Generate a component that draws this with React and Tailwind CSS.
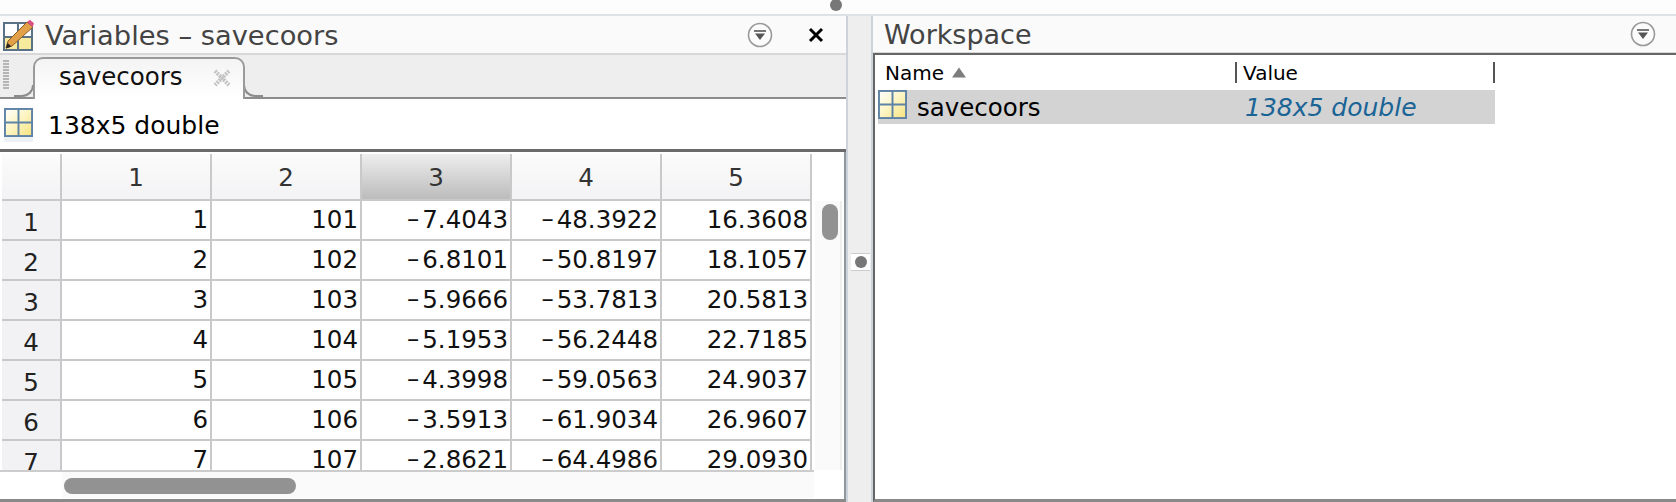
import React from "react";

const rows = [
  [1, 101, "7.4043", "48.3922", "16.3608"],
  [2, 102, "6.8101", "50.8197", "18.1057"],
  [3, 103, "5.9666", "53.7813", "20.5813"],
  [4, 104, "5.1953", "56.2448", "22.7185"],
  [5, 105, "4.3998", "59.0563", "24.9037"],
  [6, 106, "3.5913", "61.9034", "26.9607"],
  [7, 107, "2.8621", "64.4986", "29.0930"],
];

function GridIcon({ id, className }) {
  return (
    <svg viewBox="0 0 30 30" className={className}>
      <defs>
        <linearGradient id={id} x1="0" y1="0" x2="1" y2="1">
          <stop offset="0" stopColor="#ffffff" />
          <stop offset="0.45" stopColor="#fdf6c8" />
          <stop offset="1" stopColor="#f6e27e" />
        </linearGradient>
      </defs>
      <rect x="1" y="1" width="28" height="28" fill={`url(#${id})`} stroke="#5f83a6" strokeWidth="2" />
      <path d="M15 1V29M1 15H29" stroke="#5f83a6" strokeWidth="2" />
    </svg>
  );
}

function PencilIcon() {
  return (
    <svg viewBox="0 0 32 32" className="w-8 h-8 shrink-0">
      <rect x="2" y="4" width="28" height="27" fill="#fff" stroke="#5a7186" strokeWidth="2" />
      <rect x="16" y="18" width="13" height="12" fill="#f6eb9c" />
      <rect x="3" y="18" width="13" height="12" fill="#f6eb9c" />
      <path d="M16 4V31M2 18H30" stroke="#5a7186" strokeWidth="2" />
      <path d="M25 3L31 8L10 27L4 29L6 22Z" fill="#e2a148" stroke="#8a5a25" strokeWidth="1" />
      <path d="M25 3L28 0.8L32 4.5L30.5 8Z" fill="#d94f86" />
      <path d="M4 29.5L5.5 24L9.5 27.5Z" fill="#222" />
    </svg>
  );
}

function MenuIcon() {
  return (
    <svg viewBox="0 0 26 26" className="w-[26px] h-[26px] shrink-0">
      <circle cx="13" cy="13" r="11.5" fill="#fbfbfb" stroke="#9a9a9a" strokeWidth="1.6" />
      <path d="M7 9H19" stroke="#555" strokeWidth="1.6" />
      <path d="M8 11.5H18L13 18Z" fill="#555" />
    </svg>
  );
}

function HeaderCell({ children, selected }) {
  return (
    <div
      className={`h-[47px] w-[150px] pr-0 flex items-center justify-center border-r-2 border-b-2 border-[#c9c9c9] text-[24.5px] text-[#333] bg-gradient-to-b ${
        selected ? "from-[#eeeeee] to-[#bcbcbc]" : "from-[#fbfbfb] to-[#f3f3f5]"
      }`}
    >
      <span className="mt-[3px]">{children}</span>
    </div>
  );
}

function Minus() {
  return <span className="inline-block mr-[3px] -translate-y-[1px]">–</span>;
}

export default function App() {
  return (
    <div className="w-[1676px] h-[502px] overflow-hidden bg-white flex flex-col text-[#111] font-['DejaVu_Sans',sans-serif]">
      <div className="h-[14px] relative bg-[#fdfdfd] shrink-0">
        <div className="absolute left-[830px] top-[-1px] w-3 h-3 rounded-full bg-[#777]" />
      </div>
      <div className="flex-1 min-h-0 flex border-t-2 border-[#dde2e8]">
        {/* Left panel */}
        <div className="w-[848px] shrink-0 flex flex-col border-r-2 border-[#cdd3da]">
          <div className="h-[39px] shrink-0 flex items-center bg-[#fafafa] border-b-2 border-[#d8d8d8] pl-[2px]">
            <PencilIcon />
            <span className="ml-[11px] mt-1 text-[27.3px] text-[#444] whitespace-nowrap">Variables – savecoors</span>
            <div className="ml-auto flex items-center">
              <MenuIcon />
              <svg viewBox="0 0 16 16" className="w-4 h-4 ml-[35px] mr-[22px]">
                <path d="M2 2L14 14M14 2L2 14" stroke="#000" strokeWidth="3" />
              </svg>
            </div>
          </div>
          <div className="h-[44px] shrink-0 flex bg-[#eeeeee] border-b-2 border-[#8c8c8c] relative">
            <div className="absolute left-[3px] top-[5px] w-[6px] h-[30px] bg-[repeating-linear-gradient(to_bottom,#b5b5b5_0,#b5b5b5_2px,#eeeeee_2px,#eeeeee_3px)]" />
            <div className="absolute left-[14px] top-[30px] w-[20px] h-[12px] rounded-br-[12px] border-r-2 border-b-2 border-[#8c8c8c]" />
            <div className="absolute left-[243px] top-[30px] w-[20px] h-[12px] rounded-bl-[12px] border-l-2 border-b-2 border-[#8c8c8c]" />
            <div className="absolute left-[33px] top-[2px] w-[212px] h-[42px] rounded-t-[10px] border-2 border-b-0 border-[#9a9a9a] bg-gradient-to-b from-[#f4f4f4] to-[#ffffff] flex items-center pb-[3px]">
              <span className="ml-6 text-[24.5px] text-[#111]">savecoors</span>
              <svg viewBox="0 0 20 20" className="w-5 h-5 ml-[29px]">
                <path d="M3 3L17 17M17 3L3 17" stroke="#c2c2c2" strokeWidth="4" strokeDasharray="2 1" />
              </svg>
            </div>
          </div>
          <div className="h-[50px] shrink-0 flex items-center pl-1 pt-[2px]">
            <div className="bg-[#eef1f4] pb-[5px]">
              <GridIcon id="g1" className="w-[29px] h-[29px] block" />
            </div>
            <span className="ml-[15px] text-[25px] leading-none text-black">138x5 double</span>
          </div>
          <div className="h-[3px] shrink-0 bg-[#6a6a6a]" />
          <div className="flex-1 min-h-0 flex flex-col border-r-2 border-[#8f979f]">
            <div className="h-[318px] shrink-0 flex border-b-0 overflow-hidden">
              <div className="w-[812px] pt-[2px] pl-[2px] h-[318px] overflow-hidden shrink-0">
                <div className="grid grid-cols-[60px_repeat(5,150px)]">
                  <div className="h-[47px] border-r-2 border-b-2 border-[#c9c9c9] bg-gradient-to-b from-[#fbfbfb] to-[#f3f3f5]" />
                  {[1, 2, 3, 4, 5].map((n) => (
                    <HeaderCell key={n} selected={n === 3}>
                      {n}
                    </HeaderCell>
                  ))}
                  {rows.map((r) => (
                    <React.Fragment key={r[0]}>
                      <div className="h-10 border-r-2 border-b-2 border-[#c9c9c9] bg-[#f2f2f4] flex items-center justify-center text-[24.5px] text-[#222] pt-[6px]">
                        {r[0]}
                      </div>
                      {r.map((v, i) => (
                        <div
                          key={i}
                          className="h-10 border-r-2 border-b-2 border-[#c9c9c9] flex items-center justify-end pr-[2px] text-[24.5px] text-[#111]"
                        >
                          {(i === 2 || i === 3) && <Minus />}
                          {v}
                        </div>
                      ))}
                    </React.Fragment>
                  ))}
                </div>
              </div>
              <div className="flex-1 flex flex-col pt-[49px]">
                <div className="flex-1 ml-[3px] mr-[2px] bg-[#fafafa] border-r-2 border-[#eeeeee] pt-[3px] pl-[7px]">
                  <div className="w-4 h-9 rounded-lg bg-[#929292]" />
                </div>
              </div>
            </div>
            <div className="h-[28px] shrink-0 flex pl-[62px] border-t-2 border-[#cccccc] w-[814px]">
              <div className="flex-1 bg-[#fafafa] pl-[2px] pt-[6px]">
                <div className="w-[232px] h-4 rounded-lg bg-[#929292]" />
              </div>
            </div>
          </div>
          <div className="h-[3px] shrink-0 bg-[#8a8a8a]" />
        </div>

        {/* Sash */}
        <div className="w-[23px] shrink-0 bg-[#eeeeee] relative">
          <div className="absolute left-[3px] top-[237px] w-[19px] h-[18px] bg-white border-y border-[#cccccc] flex items-center justify-center">
            <div className="w-3 h-3 rounded-full bg-[#777]" />
          </div>
        </div>

        {/* Right panel */}
        <div className="flex-1 min-w-0 flex flex-col border-l-2 border-[#cdd3da]">
          <div className="h-[37px] shrink-0 flex items-center bg-[#fafafa] border-b border-[#d8d8d8] pl-[11px] pr-[20px]">
            <span className="text-[27px] text-[#444] mt-[2px]">Workspace</span>
            <div className="ml-auto">
              <MenuIcon />
            </div>
          </div>
          <div className="flex-1 min-h-0 flex flex-col border-l-2 border-t-2 border-[#666] border-b-[3px] border-b-[#8a8a8a]">
            <div className="h-[35px] shrink-0 flex items-center text-[20px] text-black pl-[10px]">
              <div className="w-[350px] flex items-center">
                <span>Name</span>
                <svg viewBox="0 0 14 10" className="w-[14px] h-[11px] ml-[8px]">
                  <path d="M7 0L14 10H0Z" fill="#7d7d7d" />
                </svg>
              </div>
              <div className="w-[260px] h-[21px] flex items-center border-l-2 border-r-2 border-[#555] pl-[6px]">Value</div>
            </div>
            <div className="ml-[3px] w-[617px] h-[34px] bg-[#d3d3d3] flex items-start">
              <GridIcon id="g2" className="w-[29px] h-[29px] shrink-0" />
              <span className="ml-[10px] w-[328px] text-[24.5px] leading-[35px] text-black">savecoors</span>
              <span className="text-[25px] leading-[35px] italic text-[#1a6496] whitespace-nowrap">138x5 double</span>
            </div>
          </div>
        </div>
      </div>
    </div>
  );
}
